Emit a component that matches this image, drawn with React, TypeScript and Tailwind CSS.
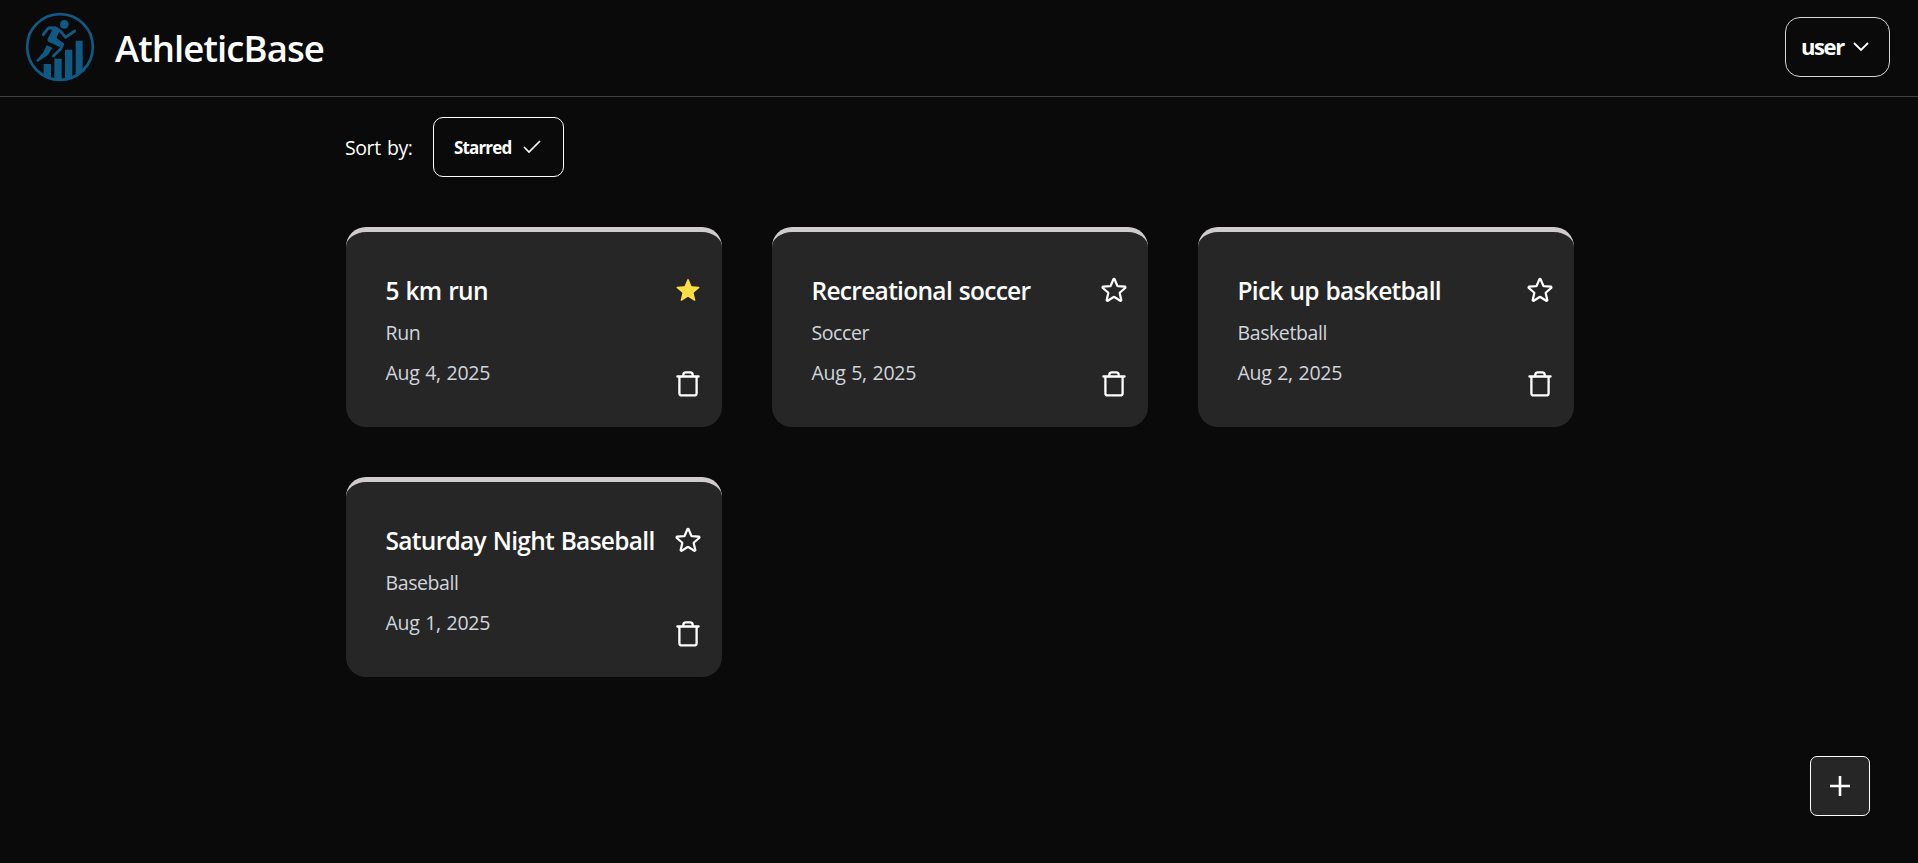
type Activity = { name: string; sport: string; date: string; starred: boolean };

const activities: Activity[] = [
  { name: "5 km run", sport: "Run", date: "Aug 4, 2025", starred: true },
  { name: "Recreational soccer", sport: "Soccer", date: "Aug 5, 2025", starred: false },
  { name: "Pick up basketball", sport: "Basketball", date: "Aug 2, 2025", starred: false },
  { name: "Saturday Night Baseball", sport: "Baseball", date: "Aug 1, 2025", starred: false },
];

function Logo() {
  return (
    <svg viewBox="0 0 240 240" className="size-20 shrink-0 text-[#0f5a85]" fill="none" stroke="currentColor">
      <clipPath id="disc">
        <circle cx="120" cy="117" r="99" />
      </clipPath>
      <circle cx="120" cy="117" r="98.5" strokeWidth="8" />
      <g clipPath="url(#disc)" fill="currentColor" stroke="none">
        <path d="M71 168h22v60H71zM103 152h22v70h-22zM135 125h22v95h-22zM167 98h21v110h-21z" />
        <path d="M71 204q24 12 50 12t46-12l20-16v40H71z" />
      </g>
      <circle cx="133" cy="49" r="13" fill="currentColor" stroke="none" />
      <path d="M88 56h18l14 9-11 25 18 13-8 14-34-16c-3-2-3-7-1-10l13-26z" fill="currentColor" stroke="none" />
      <g strokeWidth="8.5" strokeLinecap="round" strokeLinejoin="round">
        <path d="M70 80l15-20h22l15 10 15 18 27-19" />
        <path d="M94 92l34 17-6 14-22 21" />
      </g>
      <path d="M80 112l17 7-13 22-30 20c-4 1-6-2-4-5l19-22z" fill="currentColor" stroke="none" />
    </svg>
  );
}

function StarIcon({ filled }: { filled: boolean }) {
  return (
    <svg
      viewBox="0 0 24 24"
      className={filled ? "size-[30px] fill-[#ffdf43]" : "size-[30px] fill-none stroke-white"}
      strokeWidth="1.8"
      strokeLinejoin="round"
      strokeLinecap="round"
    >
      <path d="M11.48 3.499a.562.562 0 0 1 1.04 0l2.125 5.111a.563.563 0 0 0 .475.345l5.518.442c.499.04.701.663.321.988l-4.204 3.602a.563.563 0 0 0-.182.557l1.285 5.385a.562.562 0 0 1-.84.61l-4.725-2.885a.562.562 0 0 0-.586 0L6.982 20.54a.562.562 0 0 1-.84-.61l1.285-5.386a.562.562 0 0 0-.182-.557l-4.204-3.602a.562.562 0 0 1 .321-.988l5.518-.442a.563.563 0 0 0 .475-.345L11.48 3.5Z" />
    </svg>
  );
}

function TrashIcon() {
  return (
    <svg viewBox="0 0 24 26" className="h-[26px] w-6" fill="none" stroke="white" strokeWidth="2.3" strokeLinecap="round" strokeLinejoin="round">
      <path d="M1.4 5.5h21.2" />
      <path d="M7.3 5.2V4a2.6 2.6 0 0 1 2.6-2.6h4.2A2.6 2.6 0 0 1 16.7 4v1.2" />
      <path d="M3.4 6v16.2a2.2 2.2 0 0 0 2.2 2.2h12.8a2.2 2.2 0 0 0 2.2-2.2V6" />
    </svg>
  );
}

function ActivityCard({ activity }: { activity: Activity }) {
  return (
    <article className="flex h-[200px] justify-between rounded-[20px] border-t-5 border-[#d0cccc] bg-[#262626] pt-[41px] pr-[18px] pl-[39.5px]">
      <div className="flex flex-col whitespace-nowrap">
        <h2 className="text-[24.5px] leading-9 font-semibold tracking-[-0.7px] [word-spacing:1px] text-white">
          {activity.name}
        </h2>
        <p className="mt-1 text-[19.5px] leading-10 tracking-[-0.4px] text-gray-300">{activity.sport}</p>
        <p className="text-[19.5px] leading-10 tracking-[-0.3px] [word-spacing:1px] text-gray-300">{activity.date}</p>
      </div>
      <div className="flex w-8 flex-col items-center pt-0.5">
        <button aria-label="Star">
          <StarIcon filled={activity.starred} />
        </button>
        <button aria-label="Delete" className="mt-[66px]">
          <TrashIcon />
        </button>
      </div>
    </article>
  );
}

export default function App() {
  return (
    <div className="flex min-h-screen flex-col bg-[#0a0a0a] font-['Open_Sans','Noto_Sans',sans-serif] text-white">
      <header className="flex h-[97px] items-center justify-between border-b border-[#404040] pr-7 pl-5">
        <div className="flex items-center gap-[15px]">
          <Logo />
          <h1 className="text-[36.5px] leading-10 font-semibold tracking-[-0.9px]">AthleticBase</h1>
        </div>
        <button className="mb-0.5 flex h-[60px] w-[105px] items-center justify-between rounded-[15px] border border-gray-300 pr-5 pl-[15px]">
          <span className="pb-0.5 text-[22px] font-bold tracking-[-1.4px]">user</span>
          <svg viewBox="0 0 16 10" className="h-[10px] w-4" fill="none" stroke="currentColor" strokeWidth="1.9">
            <path d="M1 1l7 7 7-7" />
          </svg>
        </button>
      </header>

      <main className="ml-[346px] w-[1228px] pt-5">
        <div className="flex items-center">
          <span className="-ml-px w-[88px] pt-0.5 text-[19.5px] tracking-[-0.4px] [word-spacing:1.5px] whitespace-nowrap">
            Sort by:
          </span>
          <button className="flex h-[60px] w-[131px] items-center justify-between rounded-[10px] border border-white pr-[22px] pl-5">
            <span className="pt-0.5 text-[17px] font-bold tracking-[-0.85px]">Starred</span>
            <svg viewBox="0 0 18 14" className="h-3.5 w-[18px]" fill="none" stroke="currentColor" strokeWidth="1.7">
              <path d="M1 7l5 5L17 1" />
            </svg>
          </button>
        </div>
        <section className="mt-[50px] grid grid-cols-3 gap-[50px]">
          {activities.map((activity) => (
            <ActivityCard key={activity.name} activity={activity} />
          ))}
        </section>
      </main>

      <button
        aria-label="Add activity"
        className="mt-auto mr-12 mb-[47px] flex size-[60px] items-center justify-center self-end rounded-[7px] border border-white bg-[#262626]"
      >
        <svg viewBox="0 0 20 20" className="size-5" fill="none" stroke="currentColor" strokeWidth="2.6">
          <path d="M10 0v20M0 10h20" />
        </svg>
      </button>
    </div>
  );
}
